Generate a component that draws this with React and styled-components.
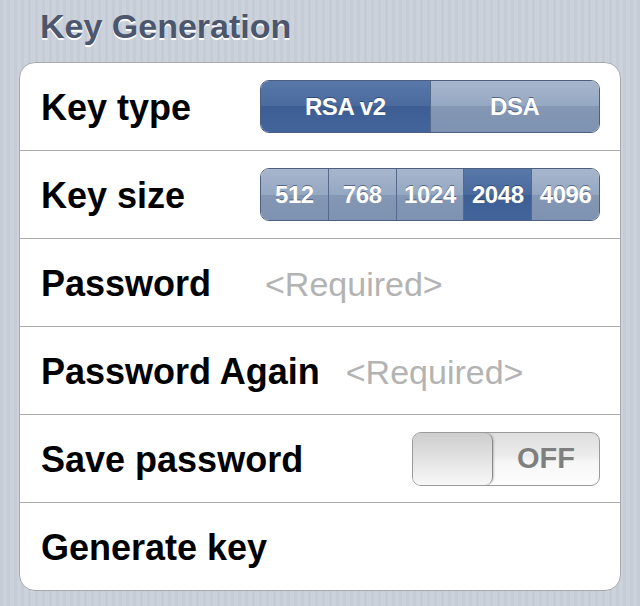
import React from "react";
import styled, { createGlobalStyle } from "styled-components";

const GlobalStyle = createGlobalStyle`
  html, body {
    margin: 0;
    padding: 0;
  }
  body {
    width: 640px;
    height: 606px;
    overflow: hidden;
    font-family: "Liberation Sans", Arial, Helvetica, sans-serif;
    background: repeating-linear-gradient(
      90deg,
      #c5ccd5 0px,
      #c5ccd5 3px,
      #cbd2db 3px,
      #cbd2db 7px
    );
  }
`;

const Page = styled.div`
  height: 606px;
  display: flex;
  flex-direction: column;
`;

const SectionTitle = styled.h2`
  margin: 0;
  height: 62px;
  box-sizing: border-box;
  padding: 6px 0 0 40px;
  font-size: 34px;
  line-height: 40px;
  font-weight: bold;
  color: #4c566c;
  text-shadow: 0 2px 0 #ffffff;
`;

const Card = styled.div`
  margin: 0 19px;
  background: #fff;
  border: 1px solid #a7a9ac;
  border-radius: 16px;
  overflow: hidden;
`;

const Row = styled.div`
  height: 87px;
  display: flex;
  align-items: center;
  padding: 0 20px 0 21px;
  border-bottom: 1px solid #acacac;
  &:last-child {
    border-bottom: 0;
  }
`;

const Label = styled.div`
  padding-top: 3px;
  font-size: 36px;
  font-weight: bold;
  color: #000;
  min-width: ${(p) => p.$min || 0}px;
  flex-shrink: 0;
`;

const Placeholder = styled.div`
  padding-top: 4px;
  margin-left: 26px;
  font-size: 34px;
  color: #b3b3b3;
`;

const Spacer = styled.div`
  flex: 1;
`;

const Segmented = styled.div`
  width: 340px;
  height: 53px;
  display: flex;
  box-sizing: border-box;
  border: 1px solid #4c5f80;
  border-radius: 9px;
  overflow: hidden;
`;

const Segment = styled.div`
  flex: 1;
  display: flex;
  align-items: center;
  justify-content: center;
  color: #fff;
  font-size: 24px;
  font-weight: bold;
  letter-spacing: -0.4px;
  text-shadow: 0 -1px 0 rgba(30, 45, 75, 0.55);
  background: ${(p) =>
    p.$on
      ? "linear-gradient(#5878a9 0%, #4a6a9e 50%, #3d5e94 50%, #43659b 100%)"
      : "linear-gradient(#a6b6cc 0%, #95a8c2 50%, #8497b5 50%, #7e93b1 100%)"};
  border-left: 1px solid #55698c;
  &:first-child {
    border-left: 0;
  }
`;

const Switch = styled.div`
  width: 188px;
  height: 54px;
  box-sizing: border-box;
  border: 1px solid #9a9a9a;
  border-radius: 9px;
  display: flex;
  overflow: hidden;
  background: linear-gradient(#dedede 0%, #ececec 45%, #f6f6f6 55%, #fdfdfd 100%);
`;

const Knob = styled.div`
  width: 80px;
  box-sizing: border-box;
  border-right: 1px solid #8a8a8a;
  border-radius: 0 8px 8px 0;
  background: linear-gradient(#cdcdcd, #f8f8f8);
  box-shadow: 1px 0 2px rgba(0, 0, 0, 0.2);
`;

const SwitchText = styled.div`
  flex: 1;
  display: flex;
  align-items: center;
  justify-content: center;
  font-size: 29px;
  font-weight: bold;
  color: #7f7f7f;
  text-shadow: 0 1px 0 #fff;
`;

export default function App() {
  const sizes = ["512", "768", "1024", "2048", "4096"];
  return (
    <Page>
      <GlobalStyle />
      <SectionTitle>Key Generation</SectionTitle>
      <Card>
        <Row>
          <Label>Key type</Label>
          <Spacer />
          <Segmented>
            <Segment $on>RSA v2</Segment>
            <Segment>DSA</Segment>
          </Segmented>
        </Row>
        <Row>
          <Label>Key size</Label>
          <Spacer />
          <Segmented>
            {sizes.map((s) => (
              <Segment key={s} $on={s === "2048"}>
                {s}
              </Segment>
            ))}
          </Segmented>
        </Row>
        <Row>
          <Label $min={198}>Password</Label>
          <Placeholder>&lt;Required&gt;</Placeholder>
        </Row>
        <Row>
          <Label $min={198}>Password Again</Label>
          <Placeholder>&lt;Required&gt;</Placeholder>
        </Row>
        <Row>
          <Label>Save password</Label>
          <Spacer />
          <Switch>
            <Knob />
            <SwitchText>OFF</SwitchText>
          </Switch>
        </Row>
        <Row>
          <Label>Generate key</Label>
        </Row>
      </Card>
    </Page>
  );
}
